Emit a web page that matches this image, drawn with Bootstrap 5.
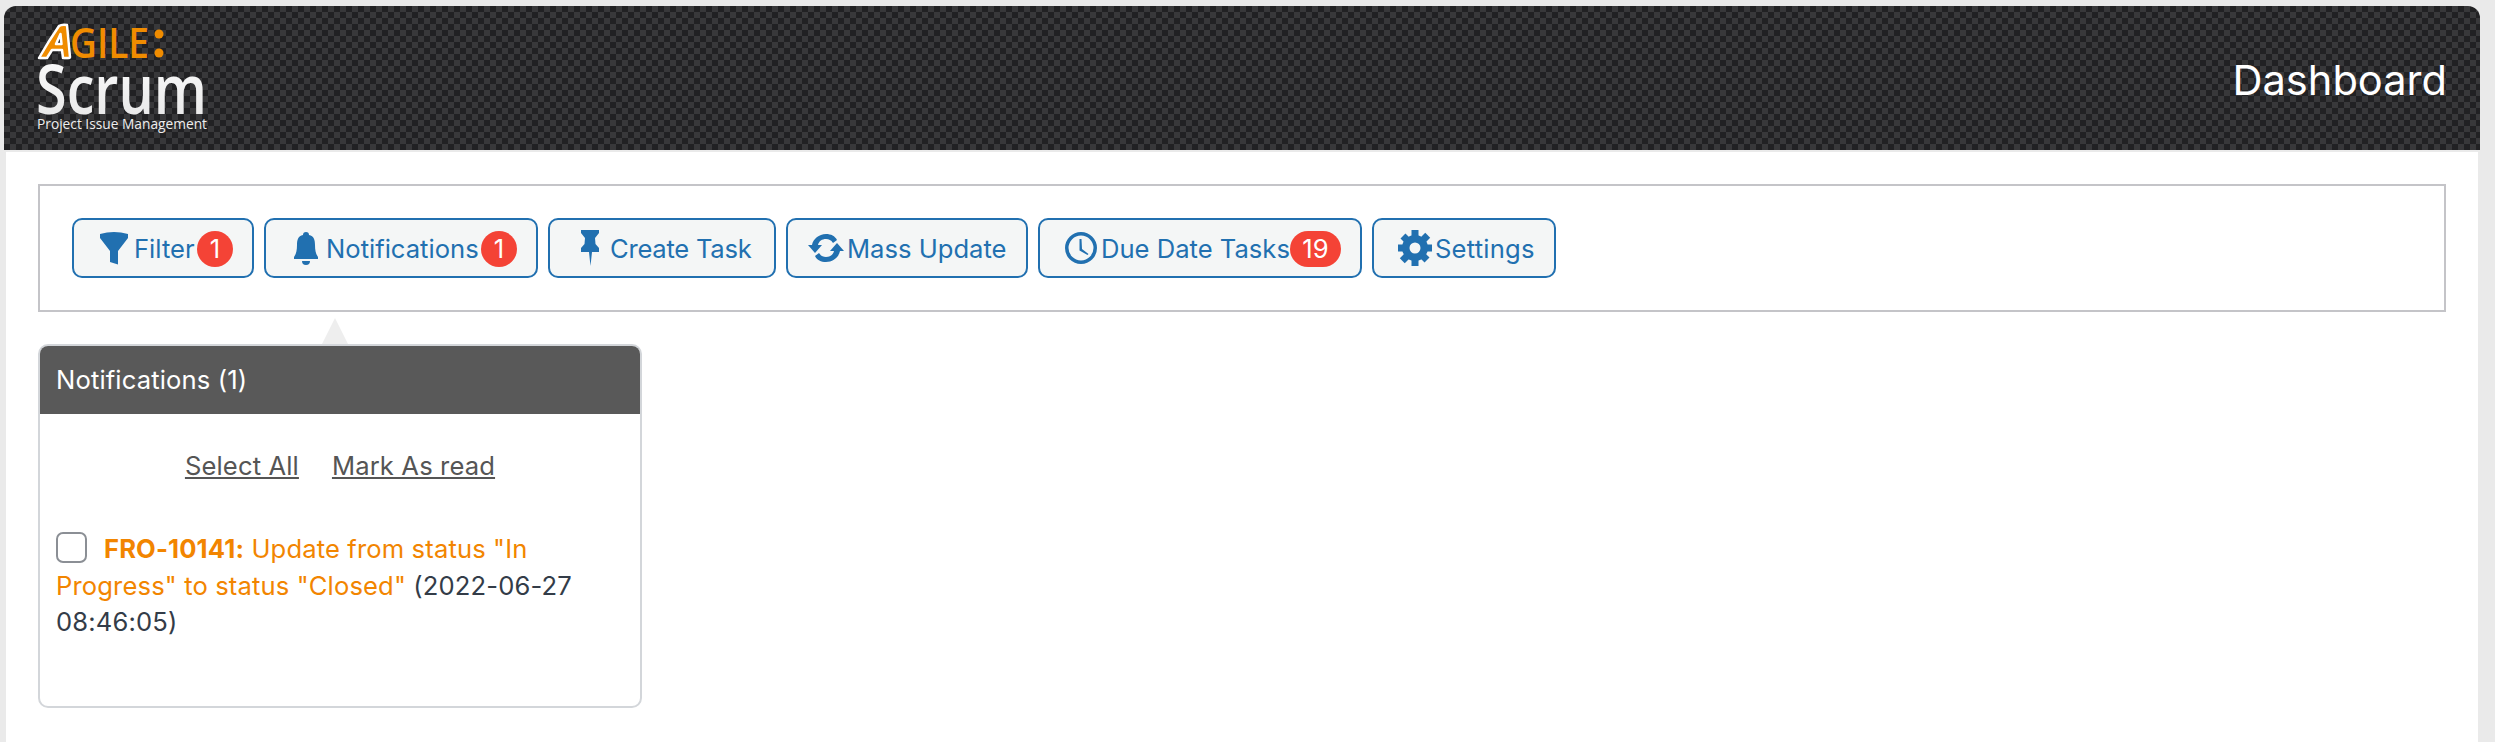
<!DOCTYPE html>
<html lang="en"><head><meta charset="utf-8">
<link rel="stylesheet" href="https://cdn.jsdelivr.net/npm/bootstrap@5.3.0/dist/css/bootstrap.min.css">
<style>
html,body{height:100%}
body{background:#eaeaea;font-family:Inter,"Liberation Sans",sans-serif;font-size:25.6px;overflow:hidden;color:#333}
.app-shell{padding:6px 15px 0 4px;height:742px}
.top-bar{height:144px;border-radius:12px 12px 0 0;padding:0 33px 0 26px;color:#fff;
 background-color:#38383a;
 background-image:linear-gradient(45deg,#212123 25%,transparent 25%,transparent 75%,#212123 75%),linear-gradient(45deg,#212123 25%,transparent 25%,transparent 75%,#212123 75%);
 background-size:12px 12px;background-position:0 0,6px 6px}
.brand-mark{width:190px;height:144px;display:block}
.page-name{font-size:41.6px;font-weight:400;margin:0;line-height:1;padding-top:5px}
.content-area{background:#fff;margin:2px 2px 0 2px;height:590px;padding:32px 32px 0 32px}
.tool-box{border:2px solid #c4c4c8;height:128px;padding:0 32px;gap:10px}
.tool-btn{height:60px;padding:1px 19px 0 20px;border:2px solid #2170b0;border-radius:10px;background:#f4f6f6;color:#2170b0;font-size:25.6px;line-height:1;white-space:nowrap}
.tool-btn:hover{background:#f4f6f6;color:#2170b0;border-color:#2170b0}
.btn-filter{width:182px}.btn-notify{width:274px}.btn-create{width:228px}.btn-mass{width:242px}.btn-due{width:324px}.btn-setup{width:184px}
.btn-create .tool-label{letter-spacing:-.25px}
.btn-setup .tool-label{letter-spacing:.2px}
.tool-ico{display:inline-flex;justify-content:center;width:40px;flex:none;margin-top:-1px}
.tool-ico svg{fill:#2170b0;stroke:none;display:block}
.ico-wide{width:41px}
.ico-mid{width:39px;justify-content:flex-start}
.count-pill{margin-left:auto;background:#f44336;color:#fff;font-size:25.6px;font-weight:400;height:36px;min-width:36px;border-radius:18px;padding:0 11px;display:inline-flex;align-items:center;justify-content:center;line-height:1}
.btn-due .count-pill{padding:0 12.5px}
.pop-wrap{width:604px;margin-top:6px}
.pop-arrow{width:0;height:0;border-left:13px solid transparent;border-right:13px solid transparent;border-bottom:26px solid #eeeeee;margin-left:284px}
.pop-panel{border:2px solid #d3d6da;border-radius:10px;height:364px;overflow:hidden;letter-spacing:.13px}
.pop-head{background:#595959;color:#fff;height:68px;padding:0 16px;font-size:25.6px}
.pop-links{gap:33px;margin-top:34px;margin-bottom:47px;line-height:36px}
.pop-links a{color:#555;font-size:25.6px}
.pop-body{padding:0 16px;line-height:36.5px;color:#333c48;font-size:25.6px}
.pop-check{width:31px;height:31px;border:2px solid #8b8f95;border-radius:7px;margin:0 17px 0 0;vertical-align:-5px;display:inline-block;background:#fff}
.note-link{color:#f28500}
</style></head><body>
<div class="app-shell">
<header class="top-bar d-flex justify-content-between align-items-center">
<svg class="brand-mark" viewBox="30 6 190 144" role="img" aria-label="Agile Scrum">
<defs><linearGradient id="scrumFill" x1="0" y1="0" x2="0" y2="1"><stop offset="0" stop-color="#fff"/><stop offset="1" stop-color="#e4e4e4"/></linearGradient></defs>
<path d="M39 58 Q48 42 59 26 Q62 24 67 25 L70 57 Q70 58 68 58 H63 L62 50 H52 L47 58Z M56 44 H61.500 L60.500 34Z" fill="#f08c00" stroke="#fff" stroke-width="2.5" stroke-linejoin="round" fill-rule="evenodd"/>
<text x="70" y="58" font-family="Open Sans,sans-serif" font-size="42" font-weight="600" fill="#f08c00" textLength="79" lengthAdjust="spacingAndGlyphs">GILE</text>
<circle cx="159" cy="34" r="4.500" fill="#f08c00"/><circle cx="159" cy="53" r="4.500" fill="#f08c00"/>
<text x="36" y="114" font-family="Open Sans,sans-serif" font-size="68" font-weight="600" fill="url(#scrumFill)" textLength="171" lengthAdjust="spacingAndGlyphs">Scrum</text>
<text x="37" y="129" font-family="Open Sans,sans-serif" font-size="14" fill="#eee" textLength="170" lengthAdjust="spacingAndGlyphs">Project Issue Management</text>
</svg>
<h1 class="page-name">Dashboard</h1>
</header>
<main class="content-area">
<div class="tool-box d-flex align-items-center">
<button class="btn tool-btn btn-filter d-inline-flex align-items-center" type="button"><span class="tool-ico"><svg width="28" height="34" viewBox="0 0 28 34"><path d="M0 3Q14 -1 28 3V7L18 20V33.500L10 31V20L0 7Z"/></svg></span><span class="tool-label">Filter</span><span class="count-pill">1</span></button>
<button class="btn tool-btn btn-notify d-inline-flex align-items-center" type="button"><span class="tool-ico"><svg width="24" height="33" viewBox="0 0 24 33"><path d="M12 0a3 3 0 0 1 3 3c5 1 6 5 6 10 0 6 1 9 3 12v2H0v-2c2-3 3-6 3-12 0-5 1-9 6-10a3 3 0 0 1 3-3ZM8 29h8a4 4 0 0 1-8 0Z"/></svg></span><span class="tool-label">Notifications</span><span class="count-pill">1</span></button>
<button class="btn tool-btn btn-create d-inline-flex align-items-center" type="button"><span class="tool-ico"><svg width="18" height="36" viewBox="0 0 18 36"><path d="M0 0H18V3L14 8 14.500 14 18 18V22H11L9.500 36 8 22H0V18L3.500 14 4 8 0 3Z"/></svg></span><span class="tool-label">Create Task</span></button>
<button class="btn tool-btn btn-mass d-inline-flex align-items-center" type="button"><span class="tool-ico ico-mid"><svg width="36" height="28" viewBox="0 0 36 28"><path d="M18 0c5 0 9 2 11 6l-4 3c-2-3-4-4-7-4-4 0-7 2-8 6h4l-7 8-7-8h4C5 5 11 0 18 0ZM18 28c-5 0-9-2-11-6l4-3c2 3 4 4 7 4 4 0 7-2 8-6h-4l7-8 7 8h-4c-1 6-7 11-14 11Z"/></svg></span><span class="tool-label">Mass Update</span></button>
<button class="btn tool-btn btn-due d-inline-flex align-items-center" type="button"><span class="tool-ico ico-wide"><svg width="32" height="32" viewBox="0 0 32 32"><path fill-rule="evenodd" d="M16 0a16 16 0 1 0 0 32 16 16 0 0 0 0-32Zm0 3.500a12.500 12.500 0 1 1 0 25 12.500 12.500 0 0 1 0-25Z"/><path d="M14.500 7h2l.5 10 6.500 5-1 1-8-4.500Z"/></svg></span><span class="tool-label">Due Date Tasks</span><span class="count-pill">19</span></button>
<button class="btn tool-btn btn-setup d-inline-flex align-items-center" type="button"><span class="tool-ico ico-wide"><svg width="34" height="36" viewBox="-17 -18 34 36"><path fill-rule="evenodd" d="M-13 0a13 13 0 1 1 26 0a13 13 0 1 1-26 0ZM-5.500 0a5.500 5.500 0 1 0 11 0a5.500 5.500 0 1 0-11 0Z"/><g id="gearTeeth"><rect x="-3.500" y="-18" width="7" height="7"/><rect x="-3.500" y="11" width="7" height="7"/><rect x="-17" y="-3.500" width="6" height="7"/><rect x="11" y="-3.500" width="6" height="7"/></g><use href="#gearTeeth" transform="rotate(45)"/></svg></span><span class="tool-label">Settings</span></button>
</div>
<div class="pop-wrap">
<div class="pop-arrow"></div>
<section class="pop-panel">
<div class="pop-head d-flex align-items-center">Notifications (1)</div>
<div class="pop-links d-flex justify-content-center"><a href="#">Select All</a><a href="#">Mark As read</a></div>
<div class="pop-body"><span class="pop-check"></span><span class="note-link"><b class="fw-bold">FRO-10141:</b> Update from status "In Progress" to status "Closed"</span> (2022-06-27 08:46:05)</div>
</section>
</div>
</main>
</div>
<script src="https://cdn.jsdelivr.net/npm/bootstrap@5.3.0/dist/js/bootstrap.bundle.min.js"></script>
</body></html>
